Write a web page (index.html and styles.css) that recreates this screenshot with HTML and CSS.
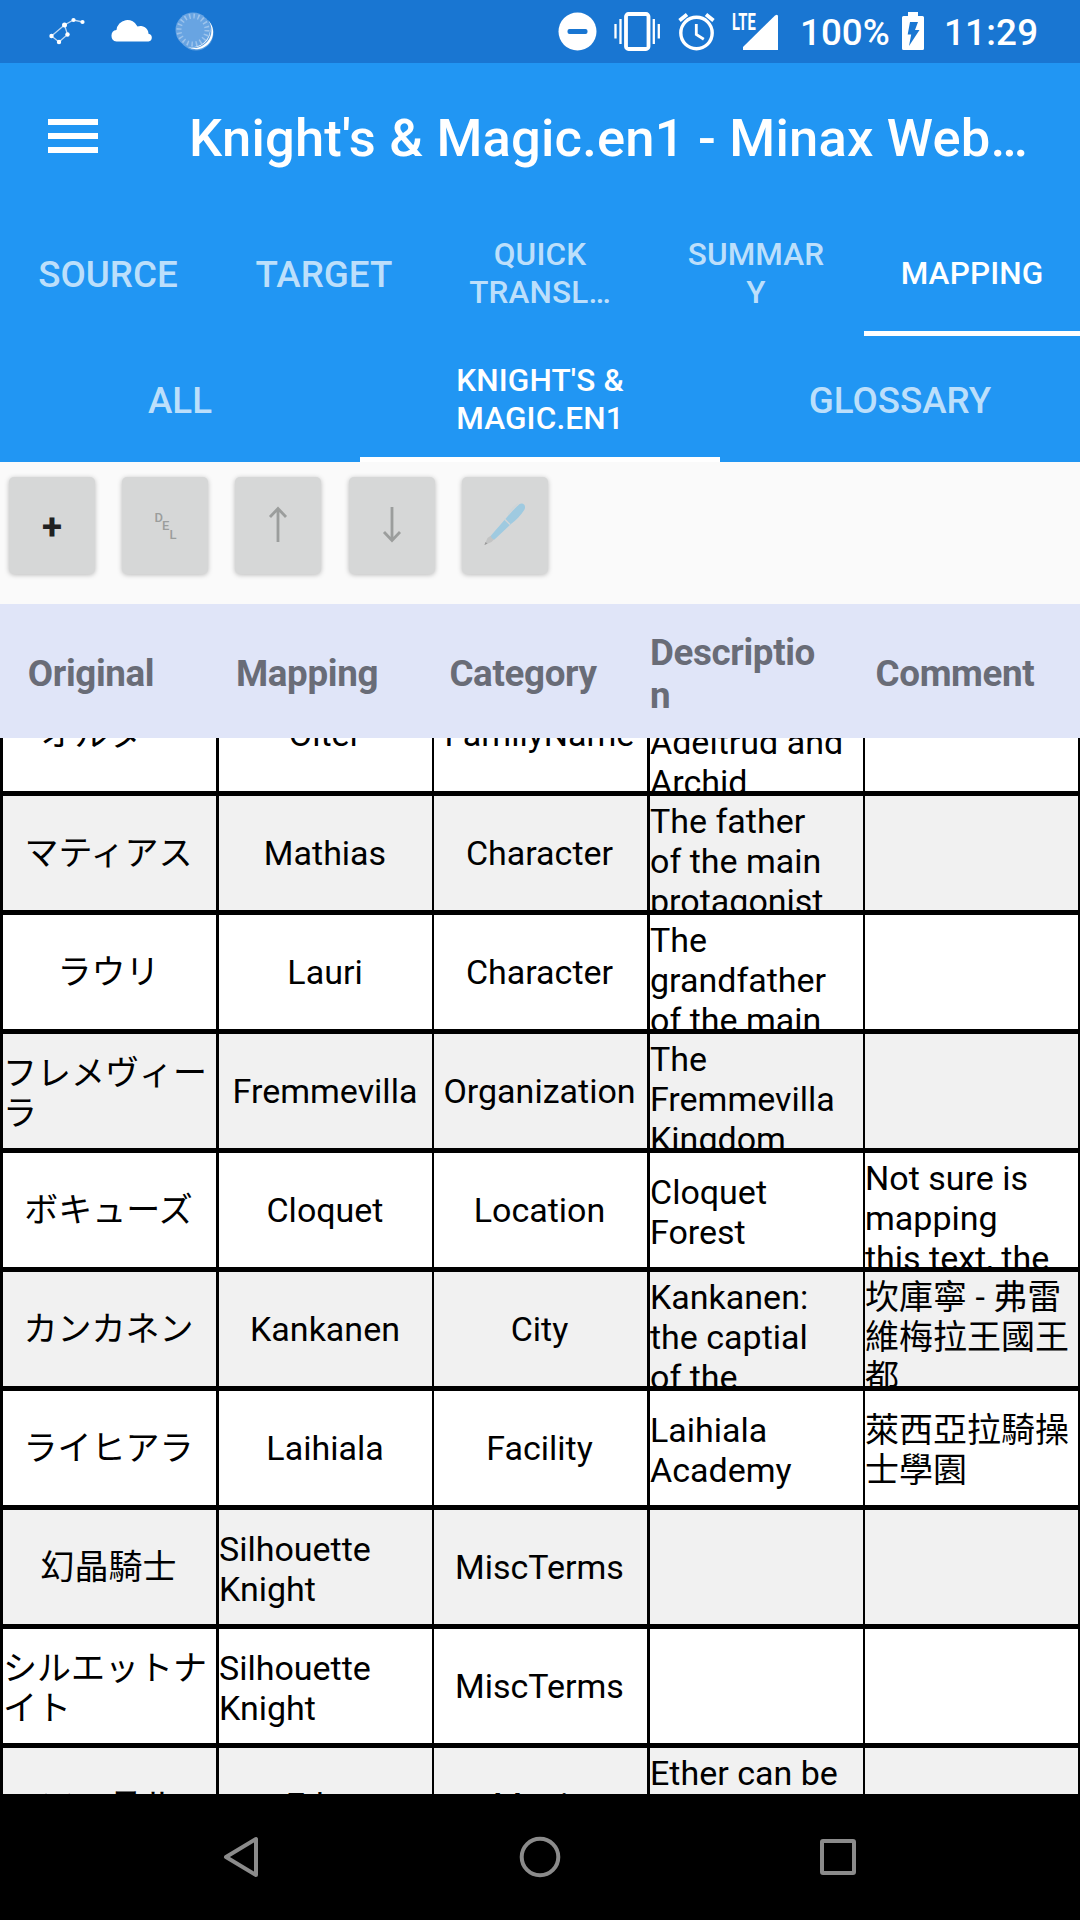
FILE: index.html
```html
<!DOCTYPE html>
<html lang="en">
<head>
<meta charset="utf-8">
<title>Knight's &amp; Magic.en1 - Minax Web</title>
<link rel="stylesheet" href="styles.css">
</head>
<body>
<div class="status">
  <svg width="172" height="63" viewBox="0 0 172 63">
    <path d="M82.500 22 73.500 20 64.500 25 51.500 36 59 42 67.500 34.500 64.500 25" stroke="#fff" stroke-opacity=".7" stroke-width="1.300" fill="none"/>
    <g fill="#fff"><circle cx="82.500" cy="22" r="2.100"/><circle cx="73.500" cy="20" r="2.100"/><circle cx="64.500" cy="25" r="2.500"/><circle cx="51.500" cy="36" r="2.200"/><circle cx="59" cy="42" r="2.200"/><circle cx="67.500" cy="34.500" r="2.200"/></g>
    <path fill="#fff" d="M116.500 41.500a5.800 5.800 0 0 1 0-11.500A11 11 0 0 1 137.500 26.500 8 8 0 0 1 148.500 33.700 3.950 3.950 0 0 1 148.500 41.500z"/>
  </svg>
  <svg width="46" height="63" viewBox="0 0 46 63">
    <circle cx="24" cy="33" r="17.500" fill="#fff" fill-opacity=".3"/>
    <path d="M15 46.500A17 17 0 0 0 36 20A17.500 17.500 0 0 1 15 46.500z" fill="#fff"/>
    <circle cx="21" cy="30" r="17.500" fill="#68a4e2"/>
    <path d="M38.200 27A17.500 17.500 0 0 1 16 46.800A18.500 18.500 0 0 0 38.200 27z" fill="#fff"/>
    <circle cx="21" cy="30" r="14" fill="none" stroke="#9cc3ec" stroke-width="5" stroke-dasharray="1.500 2.898"/>
  </svg>
  <div class="st-gap"></div>
  <svg width="200" height="63" viewBox="550 0 200 63">
    <circle cx="577.500" cy="31.500" r="19" fill="#fff"/><rect x="567.500" y="29" width="20" height="5" rx="2" fill="#1976d2"/>
    <rect x="626" y="14" width="22.500" height="35" rx="2.500" fill="none" stroke="#fff" stroke-width="3.800"/>
    <path d="M620.500 19v25M615.500 24v14.500M653.800 19v25M658.800 24v14.500" stroke="#fff" stroke-width="2.300"/>
    <circle cx="696.500" cy="33" r="15.700" fill="none" stroke="#fff" stroke-width="3.400"/>
    <path d="M696.300 24v10.500l7.500 4.700" fill="none" stroke="#fff" stroke-width="2.800"/>
    <path d="M679.500 20.500l7.500-6M713.500 20.500l-7.500-6" stroke="#fff" stroke-width="3.800"/>
  </svg>
  <div class="signal">
    <span class="lte">LTE</span>
    <svg width="50" height="63" viewBox="730 0 50 63"><path d="M743 50v-3L775 15.500q3-2 3 1V50z" fill="#fff"/></svg>
  </div>
  <span class="pct">100%</span>
  <svg width="24" height="63" viewBox="901 0 24 63"><path d="M902 17.500q0-1.500 1.500-1.500H908v-4h10v4h4.500q1.500 0 1.500 1.500v31q0 1.500-1.500 1.500h-19q-1.500 0-1.500-1.500z" fill="#fff"/><path d="M910 22h8l-3 8h4.500L909 46l2.200-11.500h-3.500z" fill="#1976d2"/></svg>
  <span class="clock">11:29</span>
</div>
<header class="toolbar">
  <svg width="50" height="36" viewBox="0 0 50 36"><path fill="#fff" d="M0 0h50v6H0zM0 14h50v6H0zM0 28h50v6H0z"/></svg>
  <h1>Knight's &amp; Magic.en1 - Minax Web…</h1>
</header>
<nav class="tabs five">
  <div class="tab"><span>SOURCE</span></div>
  <div class="tab"><span>TARGET</span></div>
  <div class="tab small"><span>QUICK<br>TRANSL…</span></div>
  <div class="tab small"><span>SUMMAR<br>Y</span></div>
  <div class="tab small active"><span>MAPPING</span></div>
</nav>
<nav class="tabs three">
  <div class="tab"><span>ALL</span></div>
  <div class="tab small active"><span>KNIGHT'S &amp;<br>MAGIC.EN1</span></div>
  <div class="tab"><span>GLOSSARY</span></div>
</nav>
<div class="actions">
  <button class="btn plus">+</button>
  <button class="btn off"><svg width="28" height="36" viewBox="0 0 28 36" class="del"><text x="3.500" y="14.500">D</text><text x="11" y="23">E</text><text x="18.500" y="31.500">L</text></svg></button>
  <button class="btn off"><svg width="20" height="38" viewBox="0 0 20 38"><path d="M10 36V2M2 11l8-8.500L18 11" fill="none" stroke="#9b9d9c" stroke-width="2.800"/></svg></button>
  <button class="btn off"><svg width="20" height="38" viewBox="0 0 20 38"><path d="M10 1v34M2 26l8 8.500L18 26" fill="none" stroke="#9b9d9c" stroke-width="2.800"/></svg></button>
  <button class="btn off"><svg width="44" height="44" viewBox="0 0 44 44"><path d="M1.500 42 4.500 35 8 32.500 11.500 36 8.500 39z" fill="#c3c4c4"/><path d="M1.500 42l1-3 2 1.500z" fill="#999"/><path d="M8 32.500 24.500 13.500Q32 5 36 1.500Q39-.5 41.500 2Q43 5 40.500 8Q36 15 28 21L11.500 36.500Q8 36 8 32.500z" fill="#9fcae0"/><path d="M21.500 16l5.500 5.500M25 11.500Q31 3 35.500 1" fill="none" stroke="#d0d5d7" stroke-width="1.500"/></svg></button>
</div>
<div class="thead">
  <div>Original</div><div>Mapping</div><div>Category</div><div>Descriptio<br>n</div><div>Comment</div>
</div>
<main class="list">
  <div class="rows">
    <div class="row"><div><p lang="ja">オルター</p></div><div><p>Olter</p></div><div><p>FamilyName</p></div><div class="over"><p><br>Adeltrud and<br>Archid</p></div><div></div></div>
    <div class="row alt"><div><p lang="ja">マティアス</p></div><div><p>Mathias</p></div><div><p>Character</p></div><div class="over"><p>The father<br>of the main<br>protagonist</p></div><div></div></div>
    <div class="row"><div><p lang="ja">ラウリ</p></div><div><p>Lauri</p></div><div><p>Character</p></div><div class="over"><p>The<br>grandfather<br>of the main</p></div><div></div></div>
    <div class="row alt"><div class="two"><p lang="ja">フレメヴィー<br>ラ</p></div><div><p>Fremmevilla</p></div><div><p>Organization</p></div><div class="over"><p>The<br>Fremmevilla<br>Kingdom</p></div><div></div></div>
    <div class="row"><div><p lang="ja">ボキューズ</p></div><div><p>Cloquet</p></div><div><p>Location</p></div><div class="two"><p>Cloquet<br>Forest</p></div><div class="over"><p>Not sure is<br>mapping<br>this text, the</p></div></div>
    <div class="row alt"><div><p lang="ja">カンカネン</p></div><div><p>Kankanen</p></div><div><p>City</p></div><div class="over"><p>Kankanen:<br>the captial<br>of the</p></div><div class="over"><p lang="zh-Hant">坎庫寧 - 弗雷<br>維梅拉王國王<br>都</p></div></div>
    <div class="row"><div><p lang="ja">ライヒアラ</p></div><div><p>Laihiala</p></div><div><p>Facility</p></div><div class="two"><p>Laihiala<br>Academy</p></div><div class="two"><p lang="zh-Hant">萊西亞拉騎操<br>士學園</p></div></div>
    <div class="row alt"><div><p lang="ja">幻晶騎士</p></div><div class="two"><p>Silhouette<br>Knight</p></div><div><p>MiscTerms</p></div><div></div><div></div></div>
    <div class="row"><div class="two"><p lang="ja">シルエットナ<br>イト</p></div><div class="two"><p>Silhouette<br>Knight</p></div><div><p>MiscTerms</p></div><div></div><div></div></div>
    <div class="row alt"><div><p lang="ja">エーテル</p></div><div><p>Ether</p></div><div><p>Magic</p></div><div class="over"><p>Ether can be</p></div><div></div></div>
  </div>
</main>
<footer class="navbar">
  <svg width="1080" height="126" viewBox="0 1794 1080 126" fill="none" stroke="#8b8b8b" stroke-width="4"><path d="M256 1839v36L226 1857z" stroke-linejoin="round"/><circle cx="540" cy="1857" r="18.300"/><rect x="822" y="1841" width="32" height="32" rx="1"/></svg>
</footer>
</body>
</html>
```
FILE: styles.css
```css
* { box-sizing: border-box; }
body { margin: 0; width: 1080px; height: 1920px; overflow: hidden; background: #fafafa; font-family: Roboto, "Noto Sans CJK JP", sans-serif; display: flex; flex-direction: column; }
svg { display: block; flex: none; }
.status { height: 63px; background: #1976d2; color: #fff; display: flex; align-items: center; flex: none; font-weight: 500; }
.st-gap { width: 332px; }
.signal { display: flex; position: relative; width: 50px; margin-left: -20px; }
.lte { position: absolute; left: 2px; top: 11px; font-size: 23px; line-height: 23px; font-weight: 700; transform: scaleX(.64); transform-origin: 0 0; }
.pct { width: 100px; margin-left: 20px; margin-right: 1px; padding-top: 2px; white-space: nowrap; font-size: 36.750px; }
.clock { margin-left: 19px; padding-top: 2px; font-size: 36.750px; letter-spacing: .2px; }
.toolbar { height: 147px; flex: none; background: #2196f3; color: #fff; display: flex; align-items: center; padding-left: 48px; }
.toolbar h1 { margin: 0 0 0 91px; padding-top: 3px; font-size: 52.500px; font-weight: 500; line-height: 62px; letter-spacing: .2px; white-space: nowrap; }
.tabs { height: 126px; flex: none; display: grid; background: #2196f3; color: #bcdffb; font-size: 36.750px; font-weight: 500; text-align: center; }
.five { grid-template-columns: repeat(5, 1fr); }
.three { grid-template-columns: repeat(3, 1fr); }
.tab { display: flex; align-items: center; justify-content: center; border: solid transparent; border-width: 5px 0; padding-top: 2px; }
.small { font-size: 31.500px; line-height: 38px; letter-spacing: .15px; }
.active { color: #fff; border-bottom-color: #fff; }
.actions { height: 142px; flex: none; padding: 15px 9px; display: flex; gap: 27.200px; }
.btn { width: 86px; height: 97px; padding: 0; border: 0; border-radius: 5px; background: #d6d7d7; box-shadow: 0 1px 5px rgba(0,0,0,.26); display: flex; align-items: center; justify-content: center; font-family: Roboto, sans-serif; }
.off { padding-bottom: 1px; }
.plus { font-size: 36.750px; font-weight: 700; color: #212121; padding-top: 2px; }
.del { font-size: 13px; fill: #9b9d9c; font-weight: 500; }
.thead { height: 134px; flex: none; background: #e0e5f8; color: #696c77; display: grid; grid-template-columns: repeat(5, 216px); align-items: center; font-size: 36.750px; line-height: 43px; font-weight: 700; letter-spacing: -.35px; padding-top: 5px; }
.thead div { display: flex; justify-content: center; padding-right: 34px; white-space: nowrap; }
.thead div:nth-child(4) { display: block; padding-left: 2px; }
.list { height: 1056px; flex: none; overflow: hidden; display: flex; flex-direction: column; justify-content: flex-start; }
.rows { margin-top: -61px; flex: none; font-size: 34px; line-height: 40px; color: #000; }
.row { height: 119px; display: grid; grid-template-columns: 219px 215px 216px 215px 215px; border-bottom: 5px solid #000; background: #fff; }
.alt { background: #f1f1f1; }
.row > div { border-right: 2px solid #000; display: flex; align-items: center; justify-content: center; overflow: hidden; white-space: nowrap; padding-right: 2px; }
.row > div:nth-child(1) { border-left: 3px solid #000; border-right-width: 3px; }
.row > div:nth-child(2) { padding-right: 1px; }
.row > div:nth-child(3) { border-right-width: 3px; }
.row p { margin: 0; }
.row > .over { justify-content: flex-start; align-items: flex-start; padding-top: 5px; }
.row > .two { justify-content: flex-start; padding-top: 3px; }
[lang="zh-Hant"] { font-family: Roboto, "Noto Sans CJK TC", sans-serif; }
.navbar { height: 126px; flex: none; background: #000; }
```
